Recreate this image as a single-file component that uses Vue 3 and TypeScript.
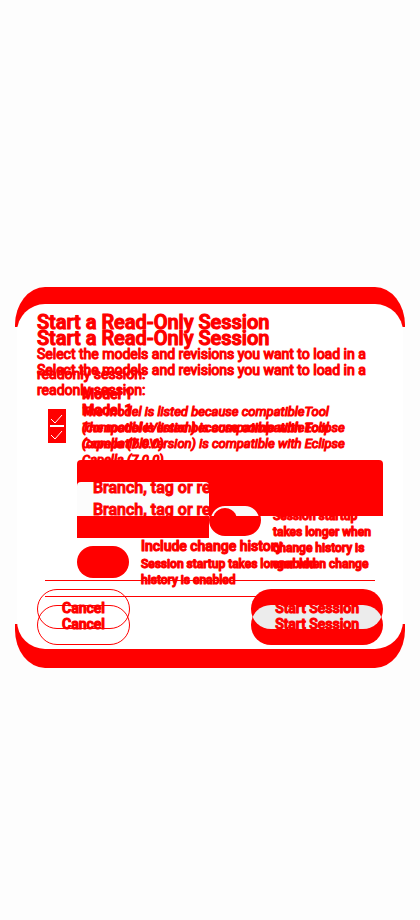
<script setup lang="ts">
import { ref } from 'vue'
interface Layer {
  id: string
}
const layers: Layer[] = [{ id: 'tall' }, { id: 'short' }]
const selected = ref<Record<string, boolean>>({ tall: true, short: true })
</script>

<template>
  <main class="page">
    <div class="stack">
      <div class="surface"><div class="surface-inner"></div></div>
      <form v-for="layer in layers" :key="layer.id" class="dialog" :class="layer.id" @submit.prevent>
        <h1>Start a Read-Only Session</h1>
        <p class="intro">Select the models and revisions you want to load in a readonly session:</p>
        <div class="model">
          <label class="check">
            <input v-model="selected[layer.id]" type="checkbox" aria-label="Model 1" />
            <svg viewBox="0 0 18 18" aria-hidden="true">
              <path d="M3 10L7 14L14 6" />
              <path v-if="layer.id === 'short'" class="seam" d="M2 1H16" />
            </svg>
          </label>
          <div class="body">
            <h2>Model 1</h2>
            <p class="note">The model is listed because compatibleTool (compatibleVersion) is compatible with Eclipse Capella (7.0.0)</p>
          </div>
        </div>
        <div class="options">
          <button type="button" class="field"><span>Branch, tag or revision</span></button>
          <label class="history">
            <span class="switch"><input type="checkbox" role="switch" /><i></i></span>
            <span class="copy">
              <span class="name">Include change history</span>
              <span class="hint">Session startup takes longer when change history is enabled</span>
            </span>
          </label>
        </div>
        <hr />
        <footer>
          <button type="button" class="cancel">Cancel</button>
          <button type="submit" class="start"><span>Start Session</span></button>
        </footer>
      </form>
    </div>
  </main>
</template>

<style>
body {
  background: #fdfdfd;
}
</style>

<style scoped>
* {
  box-sizing: border-box;
}
.page {
  min-height: 100vh;
  display: grid;
  align-items: center;
  padding: 35px 15px 0;
  font-family: Roboto, sans-serif;
  color: #f00;
  -webkit-text-stroke: 1px #f00;
  text-shadow: 0 0 1px #f00;
}
.stack {
  display: grid;
  align-items: center;
}
.surface,
.dialog {
  grid-area: 1 / 1;
}
.surface {
  align-self: stretch;
  display: grid;
  padding: 17px 2px 19px;
  border-radius: 30px / 38px;
  background: linear-gradient(#f00 40px, #fdfdfd 40px calc(100% - 44px), #f00 calc(100% - 44px));
}
.surface-inner {
  border-radius: 28px;
  background: #fff;
}
.dialog {
  margin: 0;
  padding: 24px 22px 23px;
}
h1,
h2,
p {
  margin: 0;
}
h1 {
  font-size: 20px;
  line-height: 22px;
  font-weight: 500;
}
.intro {
  margin-top: 11px;
  font-size: 14px;
  line-height: 20px;
}
.model {
  display: flex;
  gap: 16px;
  padding-left: 11px;
}
.check {
  position: relative;
  flex: none;
  width: 18px;
  height: 18px;
  margin-top: 25px;
}
.check input,
.switch input {
  appearance: none;
  display: block;
  margin: 0;
  width: 100%;
  height: 100%;
  background: #f00;
}
.check svg {
  position: absolute;
  inset: 0;
  fill: none;
  stroke: #fff;
  stroke-width: 1;
}
.check .seam {
  stroke-width: 2;
}
.body {
  flex: 1;
}
h2 {
  font-size: 14px;
  line-height: 20px;
  font-weight: 500;
}
.note {
  font-size: 13px;
  line-height: 16px;
  font-style: italic;
}
.options {
  display: grid;
  gap: 20px;
  margin-top: 8px;
  padding-left: 40px;
}
.field {
  display: block;
  width: 100%;
  height: 56px;
  padding: 0 16px;
  border: 0;
  border-radius: 4px 4px 0 0;
  background: #f00;
  color: #f00;
  font: 500 16px/24px Roboto, sans-serif;
  text-align: left;
  white-space: nowrap;
  overflow: hidden;
  -webkit-text-stroke: 1px #f00;
}
.field span {
  position: relative;
  z-index: 2;
}
.history {
  display: flex;
  align-items: center;
  gap: 12px;
}
.switch {
  position: relative;
  flex: none;
  width: 52px;
  height: 32px;
}
.switch input {
  border-radius: 16px;
}
.copy,
.name,
.hint {
  display: block;
}
.name {
  font-size: 14px;
  line-height: 20px;
  font-weight: 500;
}
.hint {
  font-size: 12px;
  line-height: 16px;
  font-weight: 500;
}
hr {
  border: 0;
  border-top: 1px solid #f00;
  margin: 8px 8px 0;
}
footer {
  display: flex;
  justify-content: space-between;
  padding-top: 8px;
}
footer button {
  height: 40px;
  padding: 0 24px 2px;
  border: 1px solid #f00;
  border-radius: 20px;
  background: transparent;
  color: #f00;
  font: 500 14px/20px Roboto, sans-serif;
  -webkit-text-stroke: 1px #f00;
  text-shadow: 0 0 1px #f00;
}
footer .start {
  position: relative;
  border: 0;
  background: #f00;
  overflow: hidden;
}
.start span {
  position: relative;
  z-index: 2;
}
.short .start::before {
  content: '';
  position: absolute;
  inset: 16px 0 -16px;
  border-radius: 20px;
  background: #ececec;
}
.short .options {
  grid-template-columns: 132px 1fr;
  gap: 0;
  margin-top: 0;
}
.short .field {
  position: relative;
  margin-top: 14px;
  background: linear-gradient(#fcfcfc 34px, #f00 34px);
}
.short .switch input {
  border: 2px solid #f00;
  background: linear-gradient(#fafafa 10px, #f00 10px);
}
.short .switch i {
  position: absolute;
  left: 4px;
  top: 4px;
  width: 24px;
  height: 24px;
  border-radius: 50%;
  background: #f00;
}
</style>
